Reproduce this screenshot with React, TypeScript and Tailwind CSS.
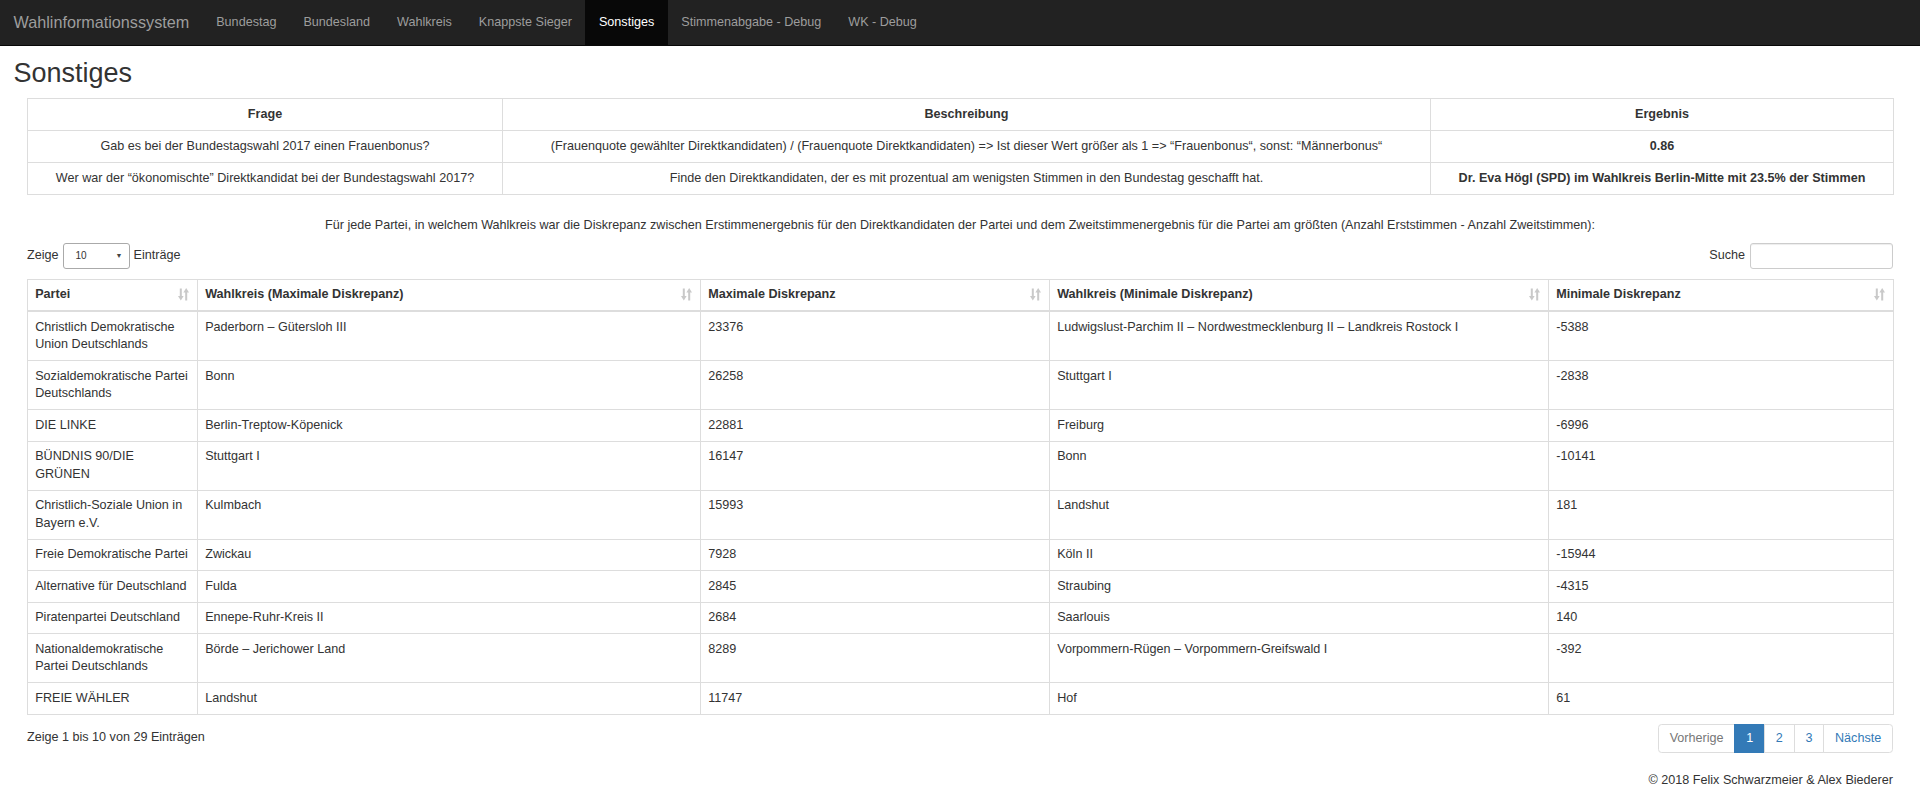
import React from "react";

const navItems = [
  "Bundestag",
  "Bundesland",
  "Wahlkreis",
  "Knappste Sieger",
  "Sonstiges",
  "Stimmenabgabe - Debug",
  "WK - Debug",
];

const rows: [string, string, string, string, string][] = [
  ["Christlich Demokratische Union Deutschlands", "Paderborn – Gütersloh III", "23376", "Ludwigslust-Parchim II – Nordwestmecklenburg II – Landkreis Rostock I", "-5388"],
  ["Sozialdemokratische Partei Deutschlands", "Bonn", "26258", "Stuttgart I", "-2838"],
  ["DIE LINKE", "Berlin-Treptow-Köpenick", "22881", "Freiburg", "-6996"],
  ["BÜNDNIS 90/DIE GRÜNEN", "Stuttgart I", "16147", "Bonn", "-10141"],
  ["Christlich-Soziale Union in Bayern e.V.", "Kulmbach", "15993", "Landshut", "181"],
  ["Freie Demokratische Partei", "Zwickau", "7928", "Köln II", "-15944"],
  ["Alternative für Deutschland", "Fulda", "2845", "Straubing", "-4315"],
  ["Piratenpartei Deutschland", "Ennepe-Ruhr-Kreis II", "2684", "Saarlouis", "140"],
  ["Nationaldemokratische Partei Deutschlands", "Börde – Jerichower Land", "8289", "Vorpommern-Rügen – Vorpommern-Greifswald I", "-392"],
  ["FREIE WÄHLER", "Landshut", "11747", "Hof", "61"],
];

const headers = [
  "Partei",
  "Wahlkreis (Maximale Diskrepanz)",
  "Maximale Diskrepanz",
  "Wahlkreis (Minimale Diskrepanz)",
  "Minimale Diskrepanz",
];

function SortIcon() {
  return (
    <svg width="11" height="13" viewBox="0 0 11 13" className="shrink-0">
      <g fill="#c9c9c9">
        <rect x="1.8" y="0.5" width="2" height="8.5" />
        <polygon points="0,8 5.6,8 2.8,12.5" />
        <rect x="7.2" y="4" width="2" height="8.5" />
        <polygon points="5.4,4.5 11,4.5 8.2,0" />
      </g>
    </svg>
  );
}

export default function App() {
  return (
    <div className="min-h-[800px] bg-white font-['Liberation_Sans',Arial,sans-serif] text-[12.6px] leading-[17.5px] text-[#333]">
      {/* Navbar */}
      <nav className="flex h-[46px] items-stretch border-b border-[#080808] bg-[#222]">
        <div className="flex items-center px-[13.5px] text-[16.2px] text-[#9d9d9d]">
          Wahlinformationssystem
        </div>
        <ul className="flex items-stretch">
          {navItems.map((item) => (
            <li
              key={item}
              className={
                item === "Sonstiges"
                  ? "flex items-center bg-[#080808] px-[13.5px] text-white"
                  : "flex items-center px-[13.5px] text-[#9d9d9d]"
              }
            >
              {item}
            </li>
          ))}
        </ul>
      </nav>

      <main className="px-[13.5px]">
        <h2 className="mt-[11.5px] text-[27px] leading-[30px] font-normal text-[#333]">Sonstiges</h2>

        <div className="px-[13.5px]">
          {/* Fragen table */}
          <table className="mt-[10.5px] w-full table-fixed border-collapse text-center">
            <colgroup>
              <col className="w-[475px]" />
              <col className="w-[928px]" />
              <col className="w-[463px]" />
            </colgroup>
            <thead>
              <tr>
                <th className="border border-[#ddd] px-[7.2px] py-[6.75px] font-bold">Frage</th>
                <th className="border border-[#ddd] px-[7.2px] py-[6.75px] font-bold">Beschreibung</th>
                <th className="border border-[#ddd] px-[7.2px] py-[6.75px] font-bold">Ergebnis</th>
              </tr>
            </thead>
            <tbody>
              <tr>
                <td className="border border-[#ddd] px-[7.2px] py-[6.75px]">
                  Gab es bei der Bundestagswahl 2017 einen Frauenbonus?
                </td>
                <td className="border border-[#ddd] px-[7.2px] py-[6.75px]">
                  (Frauenquote gewählter Direktkandidaten) / (Frauenquote Direktkandidaten) =&gt; Ist dieser Wert größer als 1 =&gt; “Frauenbonus“, sonst: “Männerbonus“
                </td>
                <td className="border border-[#ddd] px-[7.2px] py-[6.75px] font-bold">0.86</td>
              </tr>
              <tr>
                <td className="border border-[#ddd] px-[7.2px] py-[6.75px]">
                  Wer war der “ökonomischte” Direktkandidat bei der Bundestagswahl 2017?
                </td>
                <td className="border border-[#ddd] px-[7.2px] py-[6.75px]">
                  Finde den Direktkandidaten, der es mit prozentual am wenigsten Stimmen in den Bundestag geschafft hat.
                </td>
                <td className="border border-[#ddd] px-[7.2px] py-[6.75px] font-bold">
                  Dr. Eva Högl (SPD) im Wahlkreis Berlin-Mitte mit 23.5% der Stimmen
                </td>
              </tr>
            </tbody>
          </table>

          <p className="mt-[21px] text-center leading-[18px]">
            Für jede Partei, in welchem Wahlkreis war die Diskrepanz zwischen Erstimmenergebnis für den Direktkandidaten der Partei und dem Zweitstimmenergebnis für die Partei am größten (Anzahl Erststimmen - Anzahl Zweitstimmen):
          </p>

          {/* Controls */}
          <div className="mt-[8.5px] flex h-[26.5px] items-center justify-between">
            <div className="flex items-center">
              <span>Zeige</span>
              <div className="mx-[4px] flex h-[26.5px] w-[67px] items-center justify-between rounded-[3px] border border-[#aaa] bg-white pl-[12px] pr-[6px] text-[10px]">
                <span>10</span>
                <span className="text-[7px] text-[#444]">▼</span>
              </div>
              <span>Einträge</span>
            </div>
            <div className="flex items-center">
              <span>Suche</span>
              <div className="ml-[5px] h-[26.5px] w-[143px] rounded-[3px] border border-[#ccc] bg-white shadow-[inset_0_1px_1px_rgba(0,0,0,0.075)]" />
            </div>
          </div>

          {/* Data table */}
          <table className="mt-[9.5px] w-full table-fixed border-collapse text-left">
            <colgroup>
              <col className="w-[170px]" />
              <col className="w-[503px]" />
              <col className="w-[349px]" />
              <col className="w-[499px]" />
              <col className="w-[345px]" />
            </colgroup>
            <thead>
              <tr>
                {headers.map((h) => (
                  <th
                    key={h}
                    className="border border-b-2 border-[#ddd] px-[7.2px] py-[6.5px] align-bottom font-bold"
                  >
                    <div className="flex items-center justify-between">
                      <span>{h}</span>
                      <span className="mr-[1px]">
                        <SortIcon />
                      </span>
                    </div>
                  </th>
                ))}
              </tr>
            </thead>
            <tbody>
              {rows.map((r) => (
                <tr key={r[0]}>
                  {r.map((c, i) => (
                    <td key={i} className="border border-[#ddd] px-[7.2px] py-[6.5px] align-top">
                      {c}
                    </td>
                  ))}
                </tr>
              ))}
            </tbody>
          </table>

          {/* Info + pagination */}
          <div className="mt-[9px] flex items-start justify-between">
            <div className="mt-[4px] leading-[18px]">Zeige 1 bis 10 von 29 Einträgen</div>
            <div className="flex h-[29px] leading-[18px]">
              <span className="flex items-center rounded-l-[3.6px] border border-[#ddd] bg-white px-[10.8px] text-[#777]">
                Vorherige
              </span>
              <span className="-ml-px flex items-center border border-[#337ab7] bg-[#337ab7] px-[10.8px] text-white">
                1
              </span>
              <span className="-ml-px flex items-center border border-[#ddd] bg-white px-[10.8px] text-[#337ab7]">
                2
              </span>
              <span className="-ml-px flex items-center border border-[#ddd] bg-white px-[10.8px] text-[#337ab7]">
                3
              </span>
              <span className="-ml-px flex items-center rounded-r-[3.6px] border border-[#ddd] bg-white px-[10.8px] text-[#337ab7]">
                Nächste
              </span>
            </div>
          </div>

          <footer className="mt-[18.5px] text-right leading-[18px]">
            © 2018 Felix Schwarzmeier &amp; Alex Biederer
          </footer>
        </div>
      </main>
    </div>
  );
}
